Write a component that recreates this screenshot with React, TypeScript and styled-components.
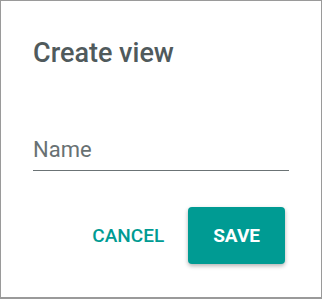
import React from 'react';
import styled, { createGlobalStyle } from 'styled-components';

const GlobalStyle = createGlobalStyle`
  html, body {
    margin: 0;
    padding: 0;
    background: #fff;
  }
  * {
    box-sizing: border-box;
  }
`;

const Dialog = styled.div`
  width: 322px;
  height: 299px;
  border: 1px solid #9a9a9a;
  border-bottom-width: 2px;
  background: #fff;
  padding: 36px 32px 0 32px;
  display: flex;
  flex-direction: column;
  font-family: Roboto, 'Liberation Sans', sans-serif;
`;

const Title = styled.h2`
  margin: 0;
  font-size: 27px;
  font-weight: 500;
  line-height: 32px;
  color: #505a5c;
`;

const Field = styled.label`
  display: block;
  margin-top: 66px;
  border-bottom: 1px solid #6b7375;
  padding-bottom: 5px;
`;

const Input = styled.input`
  width: 100%;
  border: none;
  outline: none;
  padding: 0;
  background: transparent;
  font-family: inherit;
  font-size: 22px;
  line-height: 30px;
  color: #333;

  &::placeholder {
    color: #687173;
  }
`;

const Actions = styled.div`
  display: flex;
  justify-content: flex-end;
  align-items: center;
  gap: 24px;
  margin-top: 36px;
  margin-right: 4px;
`;

const Button = styled.button<{ $primary?: boolean }>`
  border: none;
  font-family: inherit;
  font-size: 19px;
  text-transform: uppercase;
  cursor: pointer;
  border-radius: 4px;
  height: 57px;
  font-weight: ${p => (p.$primary ? 700 : 500)};
  padding: ${p => (p.$primary ? '0 25px' : '0')};
  color: ${p => (p.$primary ? '#fff' : '#009b93')};
  background: ${p => (p.$primary ? '#009b93' : 'transparent')};
  box-shadow: ${p =>
    p.$primary ? '0 2px 4px rgba(0, 0, 0, 0.3)' : 'none'};
`;

export default function App() {
  return (
    <>
      <GlobalStyle />
      <Dialog>
        <Title>Create view</Title>
        <Field>
          <Input type="text" placeholder="Name" />
        </Field>
        <Actions>
          <Button type="button">Cancel</Button>
          <Button type="button" $primary>
            Save
          </Button>
        </Actions>
      </Dialog>
    </>
  );
}
